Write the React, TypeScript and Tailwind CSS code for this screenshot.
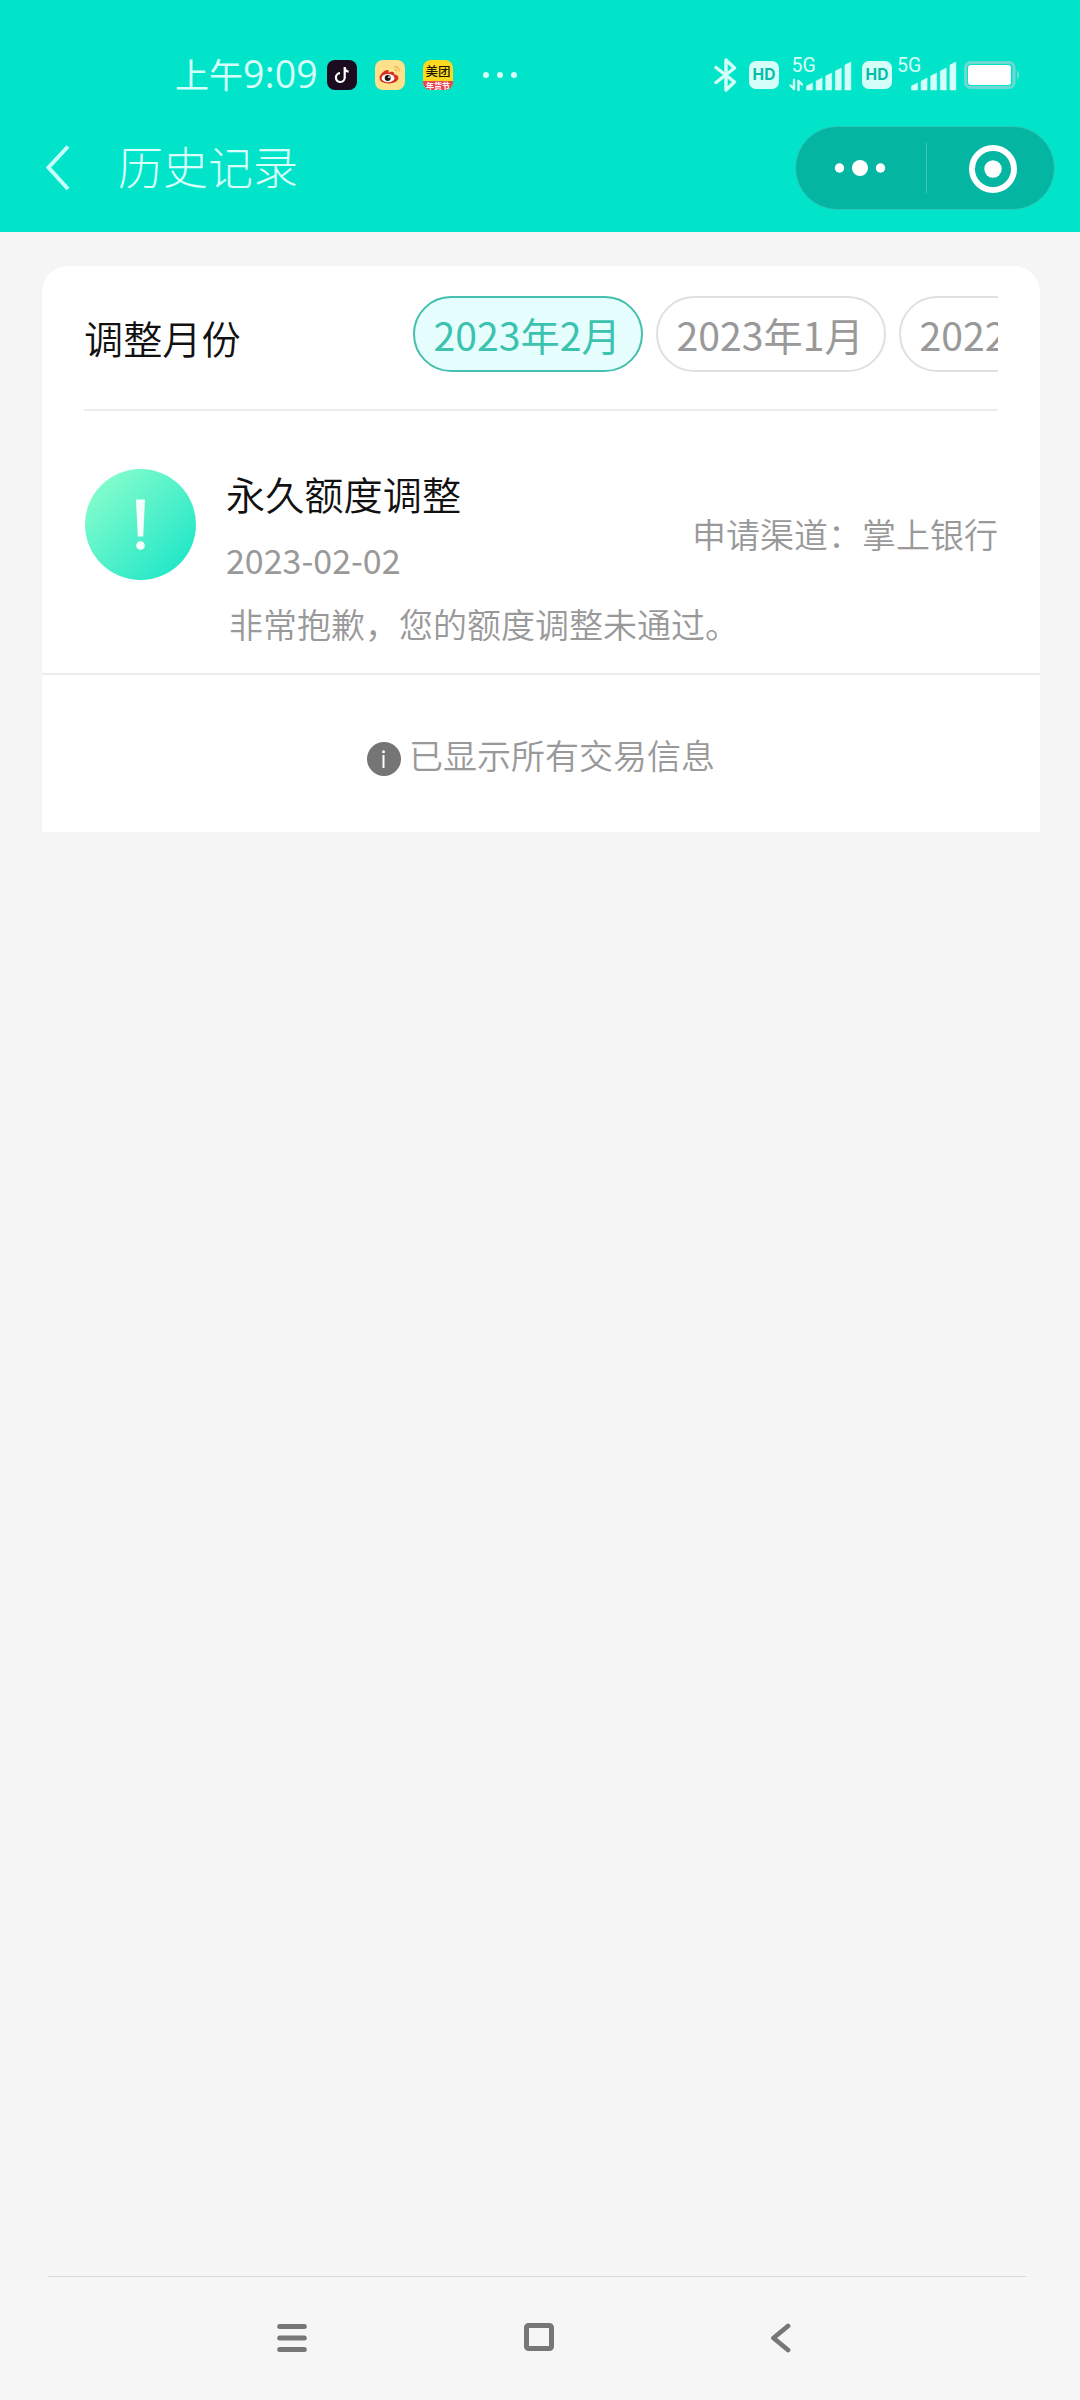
import type { ReactNode } from 'react';

const ICE = '#d4fff8';

function DouyinIcon() {
  return (
    <svg width="30" height="30" viewBox="0 0 30 30" className="ml-2.5 block">
      <rect width="30" height="30" rx="8" fill="#1d0b20" />
      <path
        d="M17.700 7v10.400a4.400 4.400 0 1 1-4.700-4.200M17.700 8c.3 2 1.600 3.400 3.900 3.600"
        fill="none"
        stroke="#fff"
        strokeWidth="2.200"
      />
    </svg>
  );
}

function WeiboIcon() {
  return (
    <svg width="30" height="30" viewBox="0 0 30 30" className="ml-[18px] block">
      <rect width="30" height="30" rx="8" fill="#fce08a" />
      <path
        d="M4.500 18c0-3.400 5-8.300 7.900-8 1.600.2 1.600 1.700 1.200 2.700 2.800-1.200 6-1.400 5.500 1.500 2.700.7 4.600 1.600 4.300 3.900-.3 3.300-5 5.600-9.800 5.400C8.300 23.400 4.500 21.400 4.500 18z"
        fill="#d9301f"
      />
      <ellipse cx="13" cy="18.200" rx="6.400" ry="4.100" fill="#fff" />
      <circle cx="12.700" cy="18" r="3" fill="#1b1512" />
      <circle cx="14" cy="17.200" r="0.900" fill="#fff" />
      <path
        d="M19.500 7c3-.8 5.200 1.500 4.500 4.200M19.800 9.500c1.200-.2 2 .6 1.700 1.700"
        fill="none"
        stroke="#e8b04a"
        strokeWidth="1.100"
        strokeLinecap="round"
      />
    </svg>
  );
}

function MeituanIcon() {
  return (
    <div className="ml-[18px] flex h-[30px] w-[30px] flex-col items-center overflow-hidden rounded-[8px] bg-[#fbd91f] text-center">
      <div className="h-[21px] text-[12.500px] leading-[21px] font-medium whitespace-nowrap text-[#1c1605]">美团</div>
      <div className="h-[9px] w-full bg-[#ea4350] text-[8px] leading-[9px] font-bold whitespace-nowrap text-white">
        年货节
      </div>
    </div>
  );
}

function BluetoothIcon() {
  return (
    <svg width="24" height="36" viewBox="0 0 24 36" className="block">
      <path
        d="M2 10.500 20.500 25 12 33V3l8.500 8L2 25.500"
        fill="none"
        stroke={ICE}
        strokeWidth="3.400"
        strokeLinecap="round"
        strokeLinejoin="round"
      />
    </svg>
  );
}

function HdBadge({ className }: { className: string }) {
  return (
    <div
      className={`${className} flex h-7 w-[30px] items-center justify-center rounded-[7px] bg-[#d4fff8] font-['Inter'] text-[15.500px] leading-none font-bold text-[#04bda8]`}
    >
      HD
    </div>
  );
}

function Signal({ className, arrows }: { className: string; arrows?: boolean }) {
  const tops = [26, 21, 16, 11, 5];
  return (
    <svg width="68" height="36" viewBox="0 0 68 36" className={`${className} block overflow-visible`}>
      <text x={arrows ? 3.500 : 4} y="14.500" fontFamily="Roboto" fontSize="19.500" fill={ICE}>
        5G
      </text>
      {arrows && (
        <path
          d="M6 23v9M6 32l-3.500-3.500M10.500 33v-9M10.500 24l3.500 3.500"
          fill="none"
          stroke={ICE}
          strokeWidth="2.400"
          strokeLinecap="round"
        />
      )}
      {tops.map((top, i) => {
        const x = 18.500 + i * 9.600;
        return (
          <path
            key={top}
            d={`M${x} ${top + 3}L${x + 6} ${top}V33H${x}Z`}
            fill={ICE}
            stroke={ICE}
            strokeWidth="0.500"
            strokeLinejoin="round"
          />
        );
      })}
    </svg>
  );
}

function Battery() {
  return (
    <svg width="58" height="28" viewBox="0 0 58 28" className="ml-[3px] block">
      <rect x="1.500" y="1.500" width="48.500" height="25" rx="5" fill="none" stroke="#6cd9d3" strokeWidth="3" />
      <rect x="4" y="4" width="43" height="20" rx="3" fill="#fff" />
      <path d="M53 9.500c3 1 3 8 0 9z" fill="#6cd9d3" />
    </svg>
  );
}

function StatusBar() {
  return (
    <div className="flex h-[50px] items-center pl-[175px] text-[#d4fff8]">
      <div className="-mt-[3px] flex w-[142px] items-baseline whitespace-nowrap">
        <span className="text-[34px] leading-[50px]">上午</span>
        <span className="font-['Open_Sans'] text-[37.500px] leading-[50px] tracking-[0.200px]">9:09</span>
      </div>
      <DouyinIcon />
      <WeiboIcon />
      <MeituanIcon />
      <div className="ml-[30px] flex gap-2">
        <i className="h-1.5 w-1.5 rounded-full bg-[#d4fff8]" />
        <i className="h-1.5 w-1.5 rounded-full bg-[#d4fff8]" />
        <i className="h-1.5 w-1.5 rounded-full bg-[#d4fff8]" />
      </div>
      <div className="ml-[197px] flex items-center">
        <BluetoothIcon />
        <HdBadge className="ml-[11px]" />
        <Signal className="ml-[9px]" arrows />
        <HdBadge className="ml-[6px]" />
        <Signal className="ml-[1px]" />
        <Battery />
      </div>
    </div>
  );
}

function NavBar() {
  return (
    <div className="mt-[26px] flex h-[84px] items-center pr-[25px] pl-[44px] text-[#d9fffb]">
      <svg width="28" height="48" viewBox="0 0 28 48" className="block">
        <path d="M24 2.500 4.500 23.500 24 45" fill="none" stroke="#c9fffb" strokeWidth="4" />
      </svg>
      <h1 className="-mt-[5px] ml-[46px] text-[45px] leading-[60px] font-light">历史记录</h1>
      <div className="ml-auto flex h-[84px] w-[260px] items-center rounded-full border border-[#2cc9b8] bg-[#04b5a1]">
        <svg width="130" height="82" viewBox="-1 0 130 82" className="block">
          <circle cx="42.500" cy="41" r="4.700" fill="#fff" />
          <circle cx="63" cy="41" r="8" fill="#fff" />
          <circle cx="83.500" cy="41" r="4.700" fill="#fff" />
        </svg>
        <div className="h-[50px] w-px bg-[#3ccabb]" />
        <svg width="127" height="82" viewBox="0 0 127 82" className="block">
          <circle cx="66" cy="42" r="21" fill="none" stroke="#fff" strokeWidth="6" />
          <circle cx="66" cy="42" r="8.700" fill="#fff" />
        </svg>
      </div>
    </div>
  );
}

function Chip({ active, children }: { active?: boolean; children: ReactNode }) {
  return (
    <button
      className={`flex h-[76px] min-w-[230px] shrink-0 items-center rounded-full border-2 pt-[2px] pr-[19px] pl-[18.500px] text-[39.200px] leading-none whitespace-nowrap ${
        active ? 'border-[#45bfae] bg-[#e6fffe] text-[#3cc3b0]' : 'border-[#e0e0e0] bg-white text-[#999]'
      }`}
    >
      {children}
    </button>
  );
}

export default function App() {
  return (
    <div className="flex h-[2400px] w-[1080px] flex-col bg-[#f5f5f5] font-['Noto_Sans_CJK_SC',sans-serif]">
      <header className="h-[232px] shrink-0 bg-[#02e4ca] pt-[50px]">
        <StatusBar />
        <NavBar />
      </header>

      <main className="mt-[34px] mr-[40px] ml-[42px] h-[566px] rounded-t-[26px] bg-white pt-[30px]">
        <div className="mx-[42px] flex h-[115px] border-b-2 border-[#ececec]">
          <h2 className="mt-[11px] w-[329px] text-[39.200px] leading-[60px] font-[350] text-[#111]">调整月份</h2>
          <div className="flex flex-1 gap-[13px] overflow-hidden">
            <Chip active>2023年2月</Chip>
            <Chip>2023年1月</Chip>
            <Chip>2022年12月</Chip>
          </div>
        </div>

        <section className="flex h-[264px] border-b-2 border-[#ececec] pr-[42px] pl-[43px]">
          <svg width="111" height="111" viewBox="0 0 111 111" className="mt-[58px] block shrink-0">
            <defs>
              <linearGradient id="badge" x1="0.100" y1="0.100" x2="0.900" y2="0.900">
                <stop offset="0" stopColor="#86fdcb" />
                <stop offset="1" stopColor="#20e6c8" />
              </linearGradient>
            </defs>
            <circle cx="55.500" cy="55.500" r="55.500" fill="url(#badge)" />
            <path d="M51 30.500h9l-1.800 37h-5.400z" fill="#f4fffb" />
            <circle cx="55.500" cy="76.500" r="4.300" fill="#f4fffb" />
          </svg>
          <div className="ml-[30px] flex-1">
            <div className="flex">
              <div className="flex-1">
                <h3 className="mt-[52px] text-[39.200px] leading-[60px] font-[350] text-[#111]">永久额度调整</h3>
                <p className="mt-[17px] text-[34px] leading-[40px] text-[#999]">2023-02-02</p>
              </div>
              <p className="mt-[103px] text-[34px] leading-[40px] font-[350] whitespace-nowrap text-[#999]">
                申请渠道：掌上银行
              </p>
            </div>
            <p className="mt-[24px] ml-[3px] text-[34px] leading-[40px] font-[350] text-[#999]">
              非常抱歉，您的额度调整未通过。
            </p>
          </div>
        </section>

        <div className="flex h-[157px] items-center justify-center">
          <svg width="34" height="34" viewBox="0 0 34 34" className="mt-[11px] block">
            <circle cx="17" cy="17" r="17" fill="#757575" />
            <circle cx="16.500" cy="9.800" r="1.500" fill="#fff" />
            <path d="M16.500 13v13" stroke="#fff" strokeWidth="2" />
          </svg>
          <span className="mt-[2px] ml-[8px] text-[34px] leading-[40px] font-[350] text-[#999]">已显示所有交易信息</span>
        </div>
      </main>

      <footer className="mt-auto h-[125px] bg-[#f6f6f6]">
        <div className="mr-[54px] ml-[48px] h-px translate-y-px bg-[#d8d8d8]" />
        <div className="flex h-[123px] items-center pl-[277px]">
          <svg width="30" height="30" viewBox="0 0 30 30" className="block">
            <path
              d="M2.700 3.500h24.600M2.700 15h24.600M2.700 26.500h24.600"
              stroke="#777"
              strokeWidth="5"
              strokeLinecap="round"
            />
          </svg>
          <svg width="30" height="28" viewBox="0 0 30 28" className="-mt-[2px] ml-[217px] block">
            <rect x="2.500" y="2.500" width="25" height="23" rx="2" fill="none" stroke="#777" strokeWidth="5" />
          </svg>
          <svg width="24" height="30" viewBox="0 0 24 30" className="ml-[215px] block">
            <path
              d="M19 3 4.500 15 19 27"
              fill="none"
              stroke="#777"
              strokeWidth="4.800"
              strokeLinecap="round"
              strokeLinejoin="round"
            />
          </svg>
        </div>
      </footer>
    </div>
  );
}
